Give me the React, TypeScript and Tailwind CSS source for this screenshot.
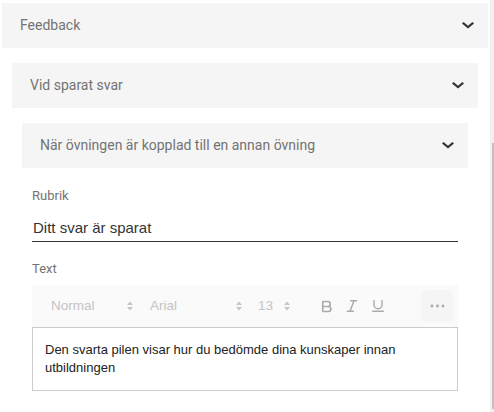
import React from "react";
import { Bold, Italic, Underline } from "lucide-react";

const roboto = "font-['Roboto',sans-serif]";
const arial = "font-['Liberation_Sans',Arial,sans-serif]";

const Chevron: React.FC = () => (
  <svg width="12" height="7" viewBox="0 0 12 7" className="shrink-0">
    <path d="M0 1.6 L1.6 0 L6 3.7 L10.4 0 L12 1.6 L6 6.6 Z" fill="#333" />
  </svg>
);

const SortArrows: React.FC = () => (
  <svg width="6" height="10" viewBox="0 0 6 10" className="shrink-0">
    <path d="M0 4 L3 0.5 L6 4 Z M0 6 L3 9.5 L6 6 Z" fill="#c6c6c6" />
  </svg>
);

const Panel: React.FC<{ title: string }> = ({ title }) => (
  <div className="flex h-[45px] items-center justify-between bg-[#f5f5f5] pl-[18px] pr-[14px]">
    <span className={`${roboto} text-[14px] text-[#737373]`}>{title}</span>
    <Chevron />
  </div>
);

const Picker: React.FC<{ label: string; width: string }> = ({ label, width }) => (
  <div className={`flex items-center justify-between ${width}`}>
    <span>{label}</span>
    <SortArrows />
  </div>
);

const Toolbar: React.FC = () => (
  <div
    className={`${arial} flex h-[42px] items-center bg-[#fafafa] pl-[19px] text-[13.5px] text-[#c4c4c4]`}
  >
    <Picker label="Normal" width="w-[82px]" />
    <div className="ml-[17px]">
      <Picker label="Arial" width="w-[92px]" />
    </div>
    <div className="ml-[16px]">
      <Picker label="13" width="w-[32px]" />
    </div>
    <div className="ml-[29px] flex items-center gap-[10px] text-[#aaa]">
      <Bold size={15} strokeWidth={2.6} />
      <Italic size={16} strokeWidth={2.2} />
      <Underline size={16} strokeWidth={2.2} />
    </div>
    <div className="ml-auto mr-[5px] flex h-[32px] w-[32px] items-center justify-center rounded-[5px] bg-[#f5f5f5]">
      <svg width="15" height="4" viewBox="0 0 15 4">
        <circle cx="2" cy="2" r="1.4" fill="#aaa" />
        <circle cx="7.5" cy="2" r="1.4" fill="#aaa" />
        <circle cx="13" cy="2" r="1.4" fill="#aaa" />
      </svg>
    </div>
  </div>
);

const App: React.FC = () => {
  return (
    <div className="flex h-[412px] w-[494px] overflow-hidden bg-white">
      <div className="flex-1 px-[2px] pt-[3px]">
        <Panel title="Feedback" />
        <div className="px-[10px] pt-[15px]">
          <Panel title="Vid sparat svar" />
          <div className="px-[10px] pt-[15px]">
            <Panel title="När övningen är kopplad till en annan övning" />
            <div className="px-[10px]">
              <div className={`${roboto} mt-[20px] text-[13px] leading-[15px] text-[#737373]`}>
                Rubrik
              </div>
              <div
                className={`${arial} mt-[15px] border-b border-[#333] pb-[3px] pl-[1px] text-[15px] leading-[20px] text-[#333]`}
              >
                Ditt svar är sparat
              </div>
              <div className={`${roboto} mt-[19px] text-[13px] leading-[15px] text-[#737373]`}>
                Text
              </div>
              <div className="mt-[9px]">
                <Toolbar />
                <div
                  className={`${arial} border border-[#ccc] px-[12px] py-[13px] text-[13px] leading-[18px] text-[#222]`}
                >
                  Den svarta pilen visar hur du bedömde dina kunskaper innan utbildningen
                </div>
              </div>
            </div>
          </div>
        </div>
      </div>
      <div className="w-[4px] bg-[#f1f1f1] pt-[143px]">
        <div className="ml-[2px] h-[266px] w-[2px] bg-[#c1c1c1]" />
      </div>
    </div>
  );
};

export default App;
